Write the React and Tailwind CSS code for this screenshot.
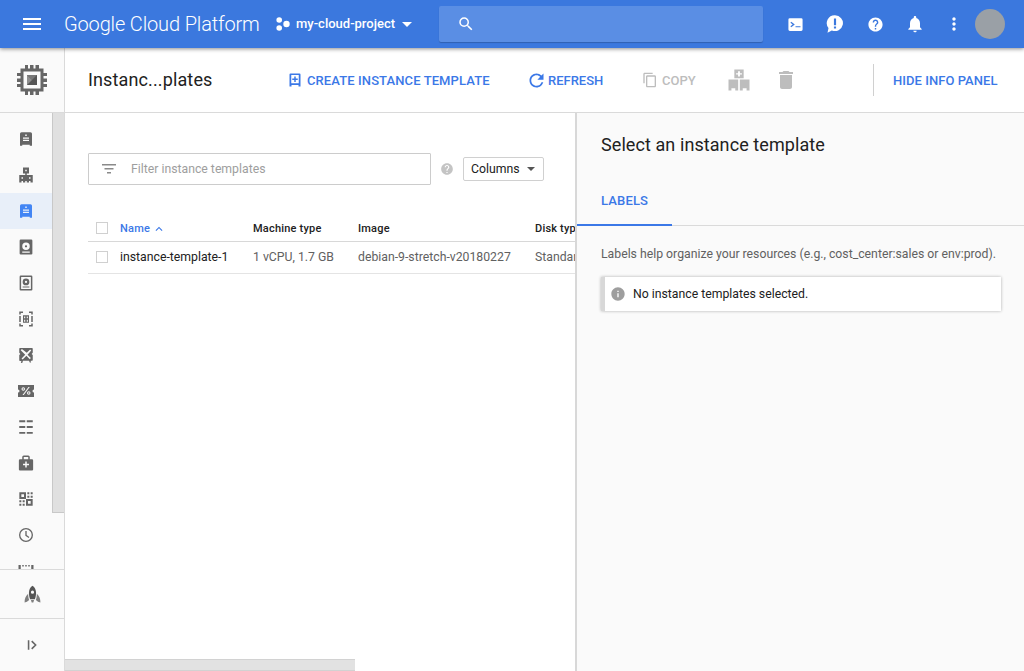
import React from 'react';
import {
  MdMenu, MdSearch, MdArrowDropDown, MdNotifications, MdMoreVert, MdHelp,
  MdRefresh, MdContentCopy, MdDelete, MdInfo, MdExpandLess,
} from 'react-icons/md';

// GCP product icons, drawn on a 24 box
const Chip = ({ className }) => (
  <svg viewBox="0 0 30 30" className={className} fill="currentColor">
    <path d="M8 0h3v3.500h2V0h3.500v3.500h2V0H22v3.500h4.500V8H30v3h-3.500v2.500H30V17h-3.500v2H30v3h-3.500v4.500H22V30h-3.500v-3.500h-2V30H13v-3.500h-2V30H8v-3.500H3.500V22H0v-3h3.500v-2H0v-3.500h3.500V11H0V8h3.500V3.500H8z" />
    <rect x="6.500" y="6.500" width="17" height="17" fill="#fafafa" />
    <rect x="10" y="10" width="10" height="10" fill="#555" />
    <path d="M10 10h10l-5 5z" fill="#777" />
    <path d="M10 10v10l5-5z" fill="#8e8e8e" />
  </svg>
);

const Template = ({ className }) => (
  <svg viewBox="0 0 24 24" className={className} fill="currentColor" fillRule="evenodd">
    <path d="M6 3h12a2 2 0 0 1 2 2v16h-3v-1.500H7V21H4V5a2 2 0 0 1 2-2zm5 3v2h2V6zm-3 4v1.500h8V10zm0 3v1.500h8V13z" />
  </svg>
);

const TemplateAdd = ({ className }) => (
  <svg viewBox="0 0 24 28" className={className} fill="currentColor" fillRule="evenodd">
    <path d="M3 1h18a2 2 0 0 1 2 2v24h-4v-3H5v3H1V3a2 2 0 0 1 2-2zm1.500 3v16.500h15V4zM10.500 7h3v4h4v3h-4v4h-3v-4h-4v-3h4z" />
  </svg>
);

const Groups = ({ className }) => (
  <svg viewBox="0 0 24 24" className={className} fill="currentColor" fillRule="evenodd">
    <path d="M8 2h8v8h-3v2h8v10h-3v-2h-2v2h-3v-2h-.5v0H11v2H8v-2H6v2H3V12h8v-2H8zm3 3v2h2V5zM6 15v2h2v-2zm10 0v2h2v-2z" />
  </svg>
);

const GroupsAdd = ({ className }) => (
  <svg viewBox="0 0 24 24" className={className} fill="currentColor" fillRule="evenodd">
    <path d="M8 3h8v7.500H8zm3.200 1.500v1.700H9.500v1.100h1.700V9h1.600V7.300h1.700V6.200h-1.700V4.500zM3 11.500h8.300V21h-2.500v-2H5.500v2H3zm9.700 0H21V21h-2.500v-2h-3.300v2h-2.500z" />
  </svg>
);

const Disk = ({ className }) => (
  <svg viewBox="0 0 24 24" className={className} fill="currentColor" fillRule="evenodd">
    <path d="M5 2h14a1.500 1.500 0 0 1 1.500 1.500v17A1.500 1.500 0 0 1 19 22H5a1.500 1.500 0 0 1-1.500-1.500v-17A1.500 1.500 0 0 1 5 2zm7 4a5 5 0 1 0 0 10 5 5 0 0 0 0-10zm0 3.500a1.500 1.500 0 1 1 0 3 1.500 1.500 0 0 1 0-3zM7 18v1.500h10V18z" />
  </svg>
);

const Snapshot = ({ className }) => (
  <svg viewBox="0 0 24 24" className={className} fill="currentColor" fillRule="evenodd">
    <path d="M5 2h14a1.500 1.500 0 0 1 1.500 1.500v17A1.500 1.500 0 0 1 19 22H5a1.500 1.500 0 0 1-1.500-1.500v-17A1.500 1.500 0 0 1 5 2zm.500 2v16h13V4zM12 6a4.500 4.500 0 1 1 0 9 4.500 4.500 0 0 1 0-9zm0 3a1.500 1.500 0 1 0 0 3 1.500 1.500 0 0 0 0-3zM7.500 16.500h9V18h-9z" />
  </svg>
);

const Images = ({ className }) => (
  <svg viewBox="0 0 24 24" className={className} fill="currentColor" fillRule="evenodd">
    <path d="M3 2h5v2H5v2H3zm13 0h5v4h-2V4h-3zM3 8h2v8H3zm16 0h2v8h-2zM3 18h2v2h3v2H3zm16 0h2v4h-5v-2h3z" />
    <path d="M8 7h8v10H8zm1.500 1.500v2.500H11V8.500zm3.500 0v2.500h1.500V8.500zM9.500 13v2.500H11V13zm3.500 0v2.500h1.500V13z" />
  </svg>
);

const Tpu = ({ className }) => (
  <svg viewBox="0 0 24 24" className={className} fill="currentColor" fillRule="evenodd">
    <path d="M4 2.500h16a1 1 0 0 1 1 1V9l-1.500 1.500 1.500 1.500v6.500a1 1 0 0 1-1 1h-1.500a2 2 0 0 0 .5 2.500h-2l-1-2.500H8L7 22.500H5a2 2 0 0 0 .5-2.500H4a1 1 0 0 1-1-1v-7l1.500-1.500L3 9V3.500a1 1 0 0 1 1-1zM6.500 4 5 5.500l6 6-5 5L7.500 18l5-5 4.500 4.500 1.500-1.500-4.500-4.500L19 6l-1.500-1.500L13 9z" />
  </svg>
);

const Commit = ({ className }) => (
  <svg viewBox="0 0 32 24" className={className} fill="currentColor" fillRule="evenodd">
    <path d="M0 0h32v9a3 3 0 0 0 0 6v9H0v-9a3 3 0 0 0 0-6zm21 4L9 20h2.500l12-16zM10.500 4.500a3.500 3.500 0 1 0 0 7 3.500 3.500 0 0 0 0-7zm0 2a1.500 1.500 0 1 1 0 3 1.500 1.500 0 0 1 0-3zm11 6a3.500 3.500 0 1 0 0 7 3.500 3.500 0 0 0 0-7zm0 2a1.500 1.500 0 1 1 0 3 1.500 1.500 0 0 1 0-3z" />
  </svg>
);

const Rows = ({ className }) => (
  <svg viewBox="0 0 24 24" className={className} fill="currentColor">
    <path d="M3 3h8v2.500H3zm10 0h8v2.500h-8zM3 10.750h8v2.500H3zm10 0h8v2.500h-8zM3 18.500h8V21H3zm10 0h8V21h-8z" />
  </svg>
);

const Case = ({ className }) => (
  <svg viewBox="0 0 24 24" className={className} fill="currentColor" fillRule="evenodd">
    <path d="M9 2h6a2 2 0 0 1 2 2v3h3a1.500 1.500 0 0 1 1.500 1.500v12A1.500 1.500 0 0 1 20 22H4a1.500 1.500 0 0 1-1.500-1.500v-12A1.500 1.500 0 0 1 4 7h3V4a2 2 0 0 1 2-2zm0 2v3h6V4zm2 6v3H8v2h3v3h2v-3h3v-2h-3v-3z" />
  </svg>
);

const Grid = ({ className }) => (
  <svg viewBox="0 0 24 24" className={className} fill="currentColor" fillRule="evenodd">
    <path d="M2 2h10v10H2zm3 3v4h4V5zM14 2h3v3h-3zm5 0h3v3h-3zm-5 5h3v3h-3zm5 0h3v3h-3zM2 14h3v3H2zm5 0h3v3H7zm-5 5h3v3H2zm5 0h3v3H7zM12 12h10v10H12zm3 3v4h4v-4z" />
  </svg>
);

const Clock = ({ className }) => (
  <svg viewBox="0 0 24 24" className={className} fill="currentColor" fillRule="evenodd">
    <path d="M12 1.500a10.500 10.500 0 1 1 0 21 10.500 10.500 0 0 1 0-21zm0 2a8.500 8.500 0 1 0 0 17 8.500 8.500 0 0 0 0-17zM11 6h2v6l4 3-1 1.500-5-3.500z" />
  </svg>
);

const Dotted = ({ className }) => (
  <svg viewBox="0 0 24 24" className={className} fill="currentColor">
    <path d="M2 4h3v18H2zm17 0h3v18h-3zM7 4h2v2H7zm4 0h2v2h-2zm4 0h2v2h-2z" />
  </svg>
);

const Rocket = ({ className }) => (
  <svg viewBox="0 0 24 24" className={className} fill="currentColor" fillRule="evenodd">
    <path d="M12 1c3 2 4.500 5 4.500 9 0 3-.7 6-1.500 8H9c-.8-2-1.500-5-1.500-8 0-4 1.500-7 4.500-9zm0 6a2 2 0 1 0 0 4 2 2 0 0 0 0-4z" />
    <path d="M6.500 11c0 3 .5 6 1.300 8L5 21l-3 1c0-4 1-8 4.500-11zm11 0C21 14 22 18 22 22l-3-1-2.800-2c.8-2 1.300-5 1.300-8zM10 19h4l-1 3h-2z" opacity=".75" />
  </svg>
);

const Terminal = ({ className }) => (
  <svg viewBox="0 0 24 24" className={className} fill="currentColor" fillRule="evenodd">
    <path d="M4 3h16a2 2 0 0 1 2 2v14a2 2 0 0 1-2 2H4a2 2 0 0 1-2-2V5a2 2 0 0 1 2-2zm2 5L4.800 9.400 8 12l-3.200 2.600L6 16l5-4zm6 6.500V16h7v-1.500z" />
  </svg>
);

const Feedback = ({ className }) => (
  <svg viewBox="0 0 24 24" className={className} fill="currentColor" fillRule="evenodd">
    <path d="M12 1.500a9.500 9.500 0 1 1-3.800 18.200L3 22.500l1.200-5.600A9.500 9.500 0 0 1 12 1.500zM10.700 5.500v8h2.600v-8zm0 9.500v2.500h2.600V15z" />
  </svg>
);

const railItems = [
  { Icon: Template, size: 'w-[18px] h-[18px]' },
  { Icon: Groups, size: 'w-[18px] h-[18px]' },
  { Icon: Template, size: 'w-[18px] h-[18px]', active: true },
  { Icon: Disk, size: 'w-[18px] h-[18px]' },
  { Icon: Snapshot, size: 'w-[18px] h-[18px]' },
  { Icon: Images, size: 'w-[18px] h-[18px]' },
  { Icon: Tpu, size: 'w-[18px] h-[18px]' },
  { Icon: Commit, size: 'w-[16px] h-[12px]' },
  { Icon: Rows, size: 'w-[18px] h-[18px]' },
  { Icon: Case, size: 'w-[18px] h-[18px]' },
  { Icon: Grid, size: 'w-[16px] h-[16px]' },
  { Icon: Clock, size: 'w-[16px] h-[16px]' },
  { Icon: Dotted, size: 'w-[18px] h-[18px]' },
];

const Checkbox = () => <span className="block w-[12px] h-[12px] -mt-[2px] border border-[#d0d0d0] bg-white" />;

export default function App() {
  return (
    <div className="w-[1024px] h-[671px] overflow-hidden flex flex-col bg-white text-[#212121] font-['Roboto',sans-serif]">
      {/* Top bar */}
      <header className="relative z-10 h-[48px] shrink-0 flex items-center bg-[#3b78de] text-white shadow-[0_1px_4px_rgba(0,0,0,0.45)]">
        <MdMenu className="ml-[20px] w-[24px] h-[24px]" />
        <span className="ml-[20px] w-[195px] text-[20px] tracking-[-0.15px] whitespace-nowrap font-light">Google Cloud Platform</span>
        <svg viewBox="0 0 14 14" className="ml-[17px] w-[14px] h-[14px]" fill="currentColor">
          <circle cx="3.200" cy="3" r="2.800" />
          <circle cx="3.200" cy="11" r="2.800" />
          <circle cx="10.500" cy="7" r="3.200" />
        </svg>
        <span className="ml-[6px] w-[99px] text-[13px] font-medium whitespace-nowrap">my-cloud-project</span>
        <MdArrowDropDown className="w-[24px] h-[24px]" />
        <div className="ml-[20px] w-[324px] h-[36px] flex items-center rounded-[2px] bg-[#5a8ee4] shadow-[0_1px_1px_rgba(0,0,0,0.2)]">
          <MdSearch className="ml-[18px] w-[18px] h-[18px]" />
        </div>
        <Terminal className="ml-[24px] w-[17px] h-[17px]" />
        <Feedback className="ml-[21px] w-[20px] h-[20px]" />
        <MdHelp className="ml-[22px] w-[17px] h-[17px]" />
        <MdNotifications className="ml-[21px] w-[20px] h-[20px]" />
        <MdMoreVert className="ml-[19px] w-[20px] h-[20px]" />
        <span className="ml-[11px] w-[30px] h-[30px] rounded-full bg-[#9aa0a6]" />
      </header>

      <div className="flex-1 min-h-0 flex">
        {/* Left rail */}
        <aside className="w-[65px] shrink-0 flex flex-col bg-[#fafafa] border-r border-[#dadada]">
          <div className="h-[65px] shrink-0 flex items-center justify-center border-b border-[#dadada] text-[#666]">
            <Chip className="w-[30px] h-[30px]" />
          </div>
          <div className="h-[456px] shrink-0 overflow-hidden flex">
            <nav className="w-[52px] shrink-0 flex flex-col pt-[8px] text-[#666]">
              {railItems.map(({ Icon, size, active }, i) => (
                <div key={i} className={`h-[36px] shrink-0 flex items-center justify-center ${active ? 'bg-[#e8eff9] text-[#4285f4]' : ''}`}>
                  <Icon className={size} />
                </div>
              ))}
            </nav>
            <div className="w-[12px] h-[400px] shrink-0 bg-[#e0e0e0] border-l border-[#c8c8c8] border-b" />
          </div>
          <div className="h-[49px] shrink-0 flex items-center justify-center border-t border-[#dadada] text-[#555]">
            <Rocket className="w-[19px] h-[19px]" />
          </div>
          <div className="flex-1 flex items-center justify-center border-t border-[#dadada] text-[#666]">
            <svg viewBox="0 0 14 12" className="w-[11px] h-[10px]" fill="none" stroke="currentColor" strokeWidth="2">
              <path d="M2 0v12M6 1l5 5-5 5" />
            </svg>
          </div>
        </aside>

        <div className="flex-1 min-w-0 flex flex-col">
          {/* Toolbar */}
          <div className="h-[65px] shrink-0 flex items-center border-b border-[#dadada] text-[13px] font-medium">
            <h1 className="ml-[23px] w-[124px] mb-[2px] text-[18px] font-normal whitespace-nowrap tracking-[0.13px]">Instanc...plates</h1>
            <TemplateAdd className="ml-[77px] w-[12px] h-[14px] text-[#3b78e7]" />
            <span className="ml-[6px] w-[184px] pt-[2px] text-[#3b78e7] whitespace-nowrap tracking-[0.1px]">CREATE INSTANCE TEMPLATE</span>
            <MdRefresh className="ml-[35px] w-[21px] h-[21px] text-[#3b78e7]" />
            <span className="ml-[1px] w-[56px] pt-[2px] text-[#3b78e7]">REFRESH</span>
            <MdContentCopy className="ml-[38px] w-[16px] h-[16px] text-[#bdbdbd]" />
            <span className="ml-[4px] w-[34px] pt-[2px] text-[#bdbdbd]">COPY</span>
            <GroupsAdd className="ml-[29px] w-[28px] h-[28px] text-[#bdbdbd]" />
            <MdDelete className="ml-[21px] w-[24px] h-[24px] text-[#bdbdbd]" />
            <span className="ml-[75px] w-px h-[32px] bg-[#d0d0d0]" />
            <span className="ml-[19px] pt-[2px] text-[#3b78e7] whitespace-nowrap tracking-[0.05px]">HIDE INFO PANEL</span>
          </div>

          <div className="flex-1 min-h-0 flex">
            {/* Table side */}
            <div className="w-[510px] shrink-0 flex flex-col overflow-hidden">
              <div className="flex-1 min-h-0 pl-[23px] pt-[40px] text-[12.250px]">
                <div className="flex items-center">
                  <div className="w-[343px] h-[32px] flex items-center border border-[#ccc] rounded-[1px]">
                    <svg viewBox="0 0 14 10" className="ml-[13px] w-[14px] h-[10px]" fill="#8a8a8a">
                      <path d="M0 0h14v1.500H0zM2.500 4h9v1.500h-9zM5 8h4v1.500H5z" />
                    </svg>
                    <span className="ml-[15px] text-[#9e9e9e]">Filter instance templates</span>
                  </div>
                  <MdHelp className="ml-[9px] w-[14px] h-[14px] text-[#c4c4c4]" />
                  <div className="ml-[9px] w-[81px] h-[24px] flex items-center justify-between pl-[7px] pr-[7px] border border-[#d0d0d0] rounded-[2px]">
                    <span>Columns</span>
                    <svg viewBox="0 0 8 4" className="w-[8px] h-[4px] mr-[1px]" fill="#555"><path d="M0 0h8L4 4z" /></svg>
                  </div>
                </div>
                <div className="mt-[30px] w-[700px] grid grid-cols-[24px_133px_105px_177px_1fr] items-center h-[27px] pt-[2px] border-b border-[#d8d8d8] font-medium pl-[8px] text-[11px]">
                  <Checkbox />
                  <span className="flex items-center text-[#3b78e7] tracking-[0.2px]">Name<MdExpandLess className="ml-[2px] w-[14px] h-[14px]" /></span>
                  <span className="tracking-[0.2px]">Machine type</span>
                  <span className="tracking-[0.2px]">Image</span>
                  <span className="tracking-[0.2px]">Disk type</span>
                </div>
                <div className="w-[700px] grid grid-cols-[24px_133px_105px_177px_1fr] items-center h-[32px] border-b border-[#e4e4e4] pl-[8px]">
                  <Checkbox />
                  <span>instance-template-1</span>
                  <span className="text-[#616161]">1 vCPU, 1.7 GB</span>
                  <span className="text-[#616161]">debian-9-stretch-v20180227</span>
                  <span className="text-[#616161]">Standard</span>
                </div>
              </div>
              <div className="h-[12px] shrink-0">
                <div className="w-[290px] h-full bg-[#e2e2e2] border-y border-[#d2d2d2]" />
              </div>
            </div>

            {/* Info panel */}
            <section className="flex-1 min-w-0 flex flex-col bg-[#fafafa] border-l-2 border-[#d8d8d8]">
              <h2 className="ml-[24px] mt-[20px] text-[18px] leading-[24px] font-normal tracking-[0.08px]">Select an instance template</h2>
              <div className="mt-[23px] h-[46px] shrink-0 border-b border-[#dadada]">
                <div className="w-[95px] h-[46px] pl-[24px] pt-[11px] border-b-2 border-[#3b78e7] text-[#3b78e7] text-[13px] font-medium tracking-[0.15px]">LABELS</div>
              </div>
              <p className="ml-[24px] mt-[19px] text-[12.250px] leading-[18px] text-[#616161] whitespace-nowrap">Labels help organize your resources (e.g., cost_center:sales or env:prod).</p>
              <div className="ml-[24px] mt-[14px] w-[400px] h-[34px] flex items-center bg-white border-l-[4px] border-[#d8d8d8] shadow-[0_0_3px_rgba(0,0,0,0.3)]">
                <MdInfo className="ml-[5px] w-[16px] h-[16px] text-[#9e9e9e]" />
                <span className="ml-[7px] text-[12.250px]">No instance templates selected.</span>
              </div>
            </section>
          </div>
        </div>
      </div>
    </div>
  );
}
